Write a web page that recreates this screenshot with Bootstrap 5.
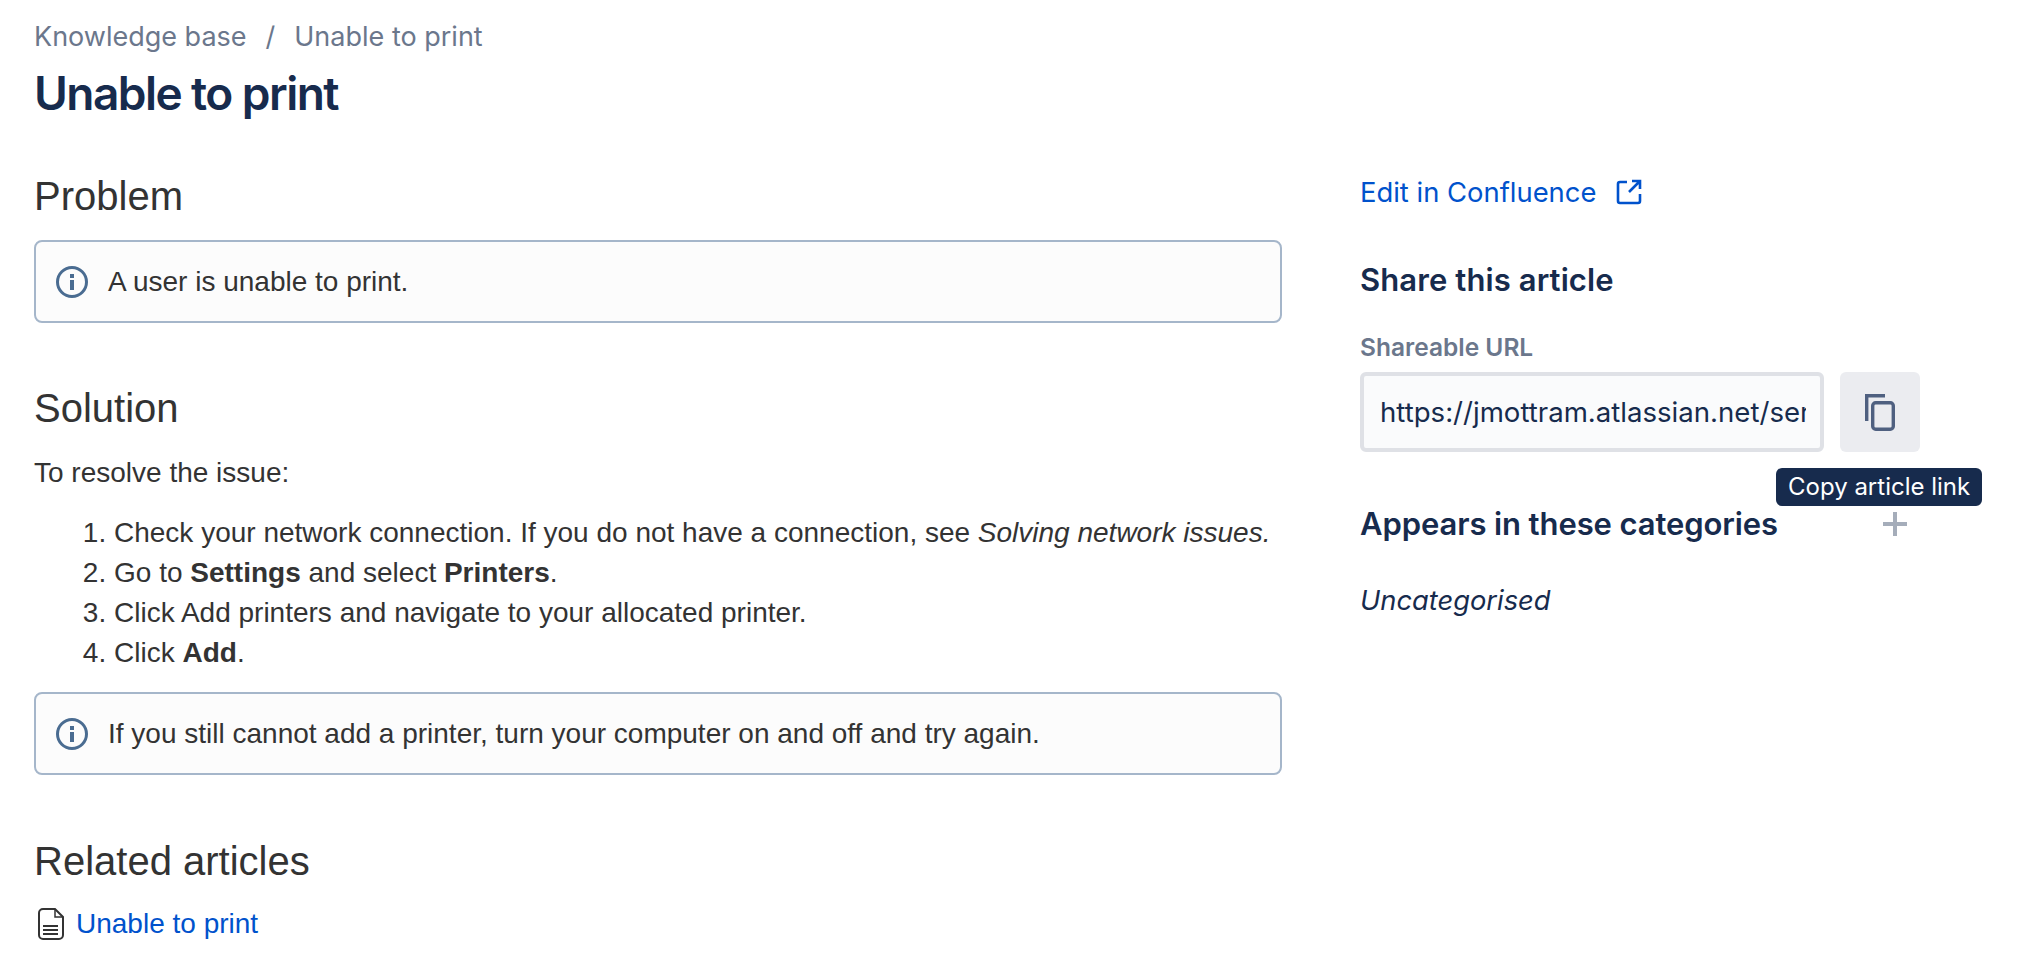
<!DOCTYPE html>
<html lang="en">
<head>
    <meta charset="UTF-8">
    <meta name="viewport" content="width=device-width, initial-scale=1.0">
    <title>Unable to print</title>
    <link href="https://cdn.jsdelivr.net/npm/bootstrap@5.3.0/dist/css/bootstrap.min.css" rel="stylesheet">
    <style>
        body {
            background-color: #fff;
            font-family: "Liberation Sans", Arial, sans-serif;
            font-size: 28px;
            line-height: 40px;
            color: #333;
        }
        .page-wrap {
            padding: 17px 42px 0 34px;
        }
        .crumbs {
            --bs-breadcrumb-divider-color: #6b778c;
            --bs-breadcrumb-item-padding-x: 19px;
            --bs-breadcrumb-margin-bottom: 0;
            font-family: Inter, sans-serif;
            font-size: 27px;
            line-height: 40px;
        }
        .crumbs a, .crumbs .breadcrumb-item {
            color: #6b778c;
            text-decoration: none;
        }
        .article-title {
            font-family: Inter, sans-serif;
            font-weight: 600;
            font-size: 46px;
            line-height: 56px;
            color: #172b4d;
            letter-spacing: -1.55px;
            margin: 8px 0 0;
        }
        .main-col {
            width: 1248px;
        }
        .side-col {
            width: 622px;
            margin-left: 78px;
            font-family: Inter, sans-serif;
            color: #172b4d;
        }
        .sect-head {
            font-size: 40px;
            line-height: 48px;
            font-weight: 400;
            color: #333;
            margin: 0;
        }
        .info-box {
            display: flex;
            align-items: center;
            gap: 18px;
            height: 83px;
            padding: 0 18px;
            background: #fcfcfc;
            border: 2px solid #a5b6ca;
            border-radius: 8px;
        }
        .steps {
            margin: 0;
            padding-left: 80px;
        }
        .blue-link {
            color: #0052cc;
            text-decoration: none;
        }
        .side-link {
            font-size: 27.4px;
            line-height: 40px;
        }
        .side-head {
            font-size: 31px;
            line-height: 40px;
            font-weight: 600;
            color: #172b4d;
            letter-spacing: -0.1px;
            margin: 0;
        }
        .share-head {
            letter-spacing: 0.1px;
        }
        .url-label {
            font-size: 24.5px;
            line-height: 30px;
            font-weight: 600;
            color: #6b778c;
            margin: 0;
        }
        .url-input {
            width: 464px;
            height: 80px;
            padding: 0 14px 0 16px;
            font-size: 27.6px;
            font-family: Inter, sans-serif;
            color: #172b4d;
            background: #fafbfc;
            border: 4px solid #dfe1e6;
            border-radius: 6px;
        }
        .copy-btn {
            width: 80px;
            height: 80px;
            padding: 0;
            background: #ebecf0;
            border: 0;
            border-radius: 6px;
        }
        .copy-tip {
            position: absolute;
            top: 96px;
            left: 416px;
            padding: 0 12px;
            height: 38px;
            line-height: 38px;
            font-size: 24px;
            white-space: nowrap;
            color: #fff;
            background: #172b4d;
            border-radius: 6px;
        }
        .cat-row {
            width: 547px;
        }
    </style>
</head>
<body>
    <div class="page-wrap">
        <ol class="breadcrumb crumbs">
            <li class="breadcrumb-item"><a href="#">Knowledge base</a></li>
            <li class="breadcrumb-item active">Unable to print</li>
        </ol>
        <h1 class="article-title">Unable to print</h1>

        <div class="d-flex" style="margin-top: 51px">
            <!-- article -->
            <div class="main-col">
                <h2 class="sect-head">Problem</h2>
                <div class="info-box" style="margin-top: 20px">
                    <svg width="36" height="36" viewBox="0 0 36 36" class="flex-shrink-0"><circle cx="18" cy="18" r="14.5" fill="none" stroke="#4a6c91" stroke-width="3"/><rect x="16" y="16" width="4" height="10" fill="#4a6c91"/><rect x="16" y="10" width="4" height="4" fill="#4a6c91"/></svg>
                    <span>A user is unable to print.</span>
                </div>

                <h2 class="sect-head" style="margin-top: 61px">Solution</h2>
                <p class="mb-0" style="margin-top: 21px">To resolve the issue:</p>
                <ol class="steps" style="margin-top: 20px">
                    <li>Check your network connection. If you do not have a connection, see <em>Solving network issues.</em></li>
                    <li>Go to <strong>Settings</strong> and select <strong>Printers</strong>.</li>
                    <li>Click Add printers and navigate to your allocated printer.</li>
                    <li>Click <strong>Add</strong>.</li>
                </ol>
                <div class="info-box" style="margin-top: 19px">
                    <svg width="36" height="36" viewBox="0 0 36 36" class="flex-shrink-0"><circle cx="18" cy="18" r="14.5" fill="none" stroke="#4a6c91" stroke-width="3"/><rect x="16" y="16" width="4" height="10" fill="#4a6c91"/><rect x="16" y="10" width="4" height="4" fill="#4a6c91"/></svg>
                    <span>If you still cannot add a printer, turn your computer on and off and try again.</span>
                </div>

                <h2 class="sect-head" style="margin-top: 62px">Related articles</h2>
                <div class="d-flex align-items-center gap-2" style="margin-top: 19px">
                    <svg width="34" height="34" viewBox="0 0 34 34" class="flex-shrink-0"><path d="M9 2h12l8 8v18a4 4 0 0 1-4 4H9a4 4 0 0 1-4-4V6a4 4 0 0 1 4-4z" fill="none" stroke="#333" stroke-width="2"/><path d="M21 2v8h8" fill="none" stroke="#333" stroke-width="1.5"/><path d="M9 19h15M9 23h15M9 27h15" stroke="#333" stroke-width="2"/></svg>
                    <a href="#" class="blue-link">Unable to print</a>
                </div>
            </div>

            <!-- sidebar -->
            <div class="side-col">
                <div class="d-flex align-items-center side-link" style="gap: 20px">
                    <a href="#" class="blue-link">Edit in Confluence</a>
                    <svg width="26" height="26" viewBox="0 0 26 26"><path d="M11 3H4a2 2 0 0 0-2 2v17a2 2 0 0 0 2 2h18a2 2 0 0 0 2-2v-7" fill="none" stroke="#0052cc" stroke-width="2.6"/><path d="M16 2h8v8M24 2L13 13" fill="none" stroke="#0052cc" stroke-width="2.6"/></svg>
                </div>
                <h3 class="side-head share-head" style="margin-top: 48px">Share this article</h3>
                <p class="url-label" style="margin-top: 32px">Shareable URL</p>
                <div class="position-relative">
                    <div class="d-flex" style="margin-top: 10px; gap: 16px">
                        <input class="form-control url-input" readonly value="https://jmottram.atlassian.net/servicedesk/customer/kb/view/1">
                        <button class="btn copy-btn d-flex align-items-center justify-content-center" type="button" aria-label="Copy article link">
                            <svg width="30" height="37" viewBox="0 0 30 37"><path d="M1.7 27V1.7H20" fill="none" stroke="#4f6080" stroke-width="3.4"/><rect x="7.7" y="8.7" width="20.6" height="26.6" rx="3" fill="none" stroke="#4f6080" stroke-width="3.4"/></svg>
                        </button>
                    </div>
                    <div class="copy-tip">Copy article link</div>
                </div>
                <div class="d-flex align-items-center justify-content-between cat-row" style="margin-top: 52px">
                    <h3 class="side-head">Appears in these categories</h3>
                    <svg width="24" height="24" viewBox="0 0 24 24"><path d="M12 0v24M0 12h24" stroke="#a5adba" stroke-width="4"/></svg>
                </div>
                <p class="mb-0" style="margin-top: 37px; font-style: italic; font-size: 27.3px">Uncategorised</p>
            </div>
        </div>
    </div>
</body>
</html>
